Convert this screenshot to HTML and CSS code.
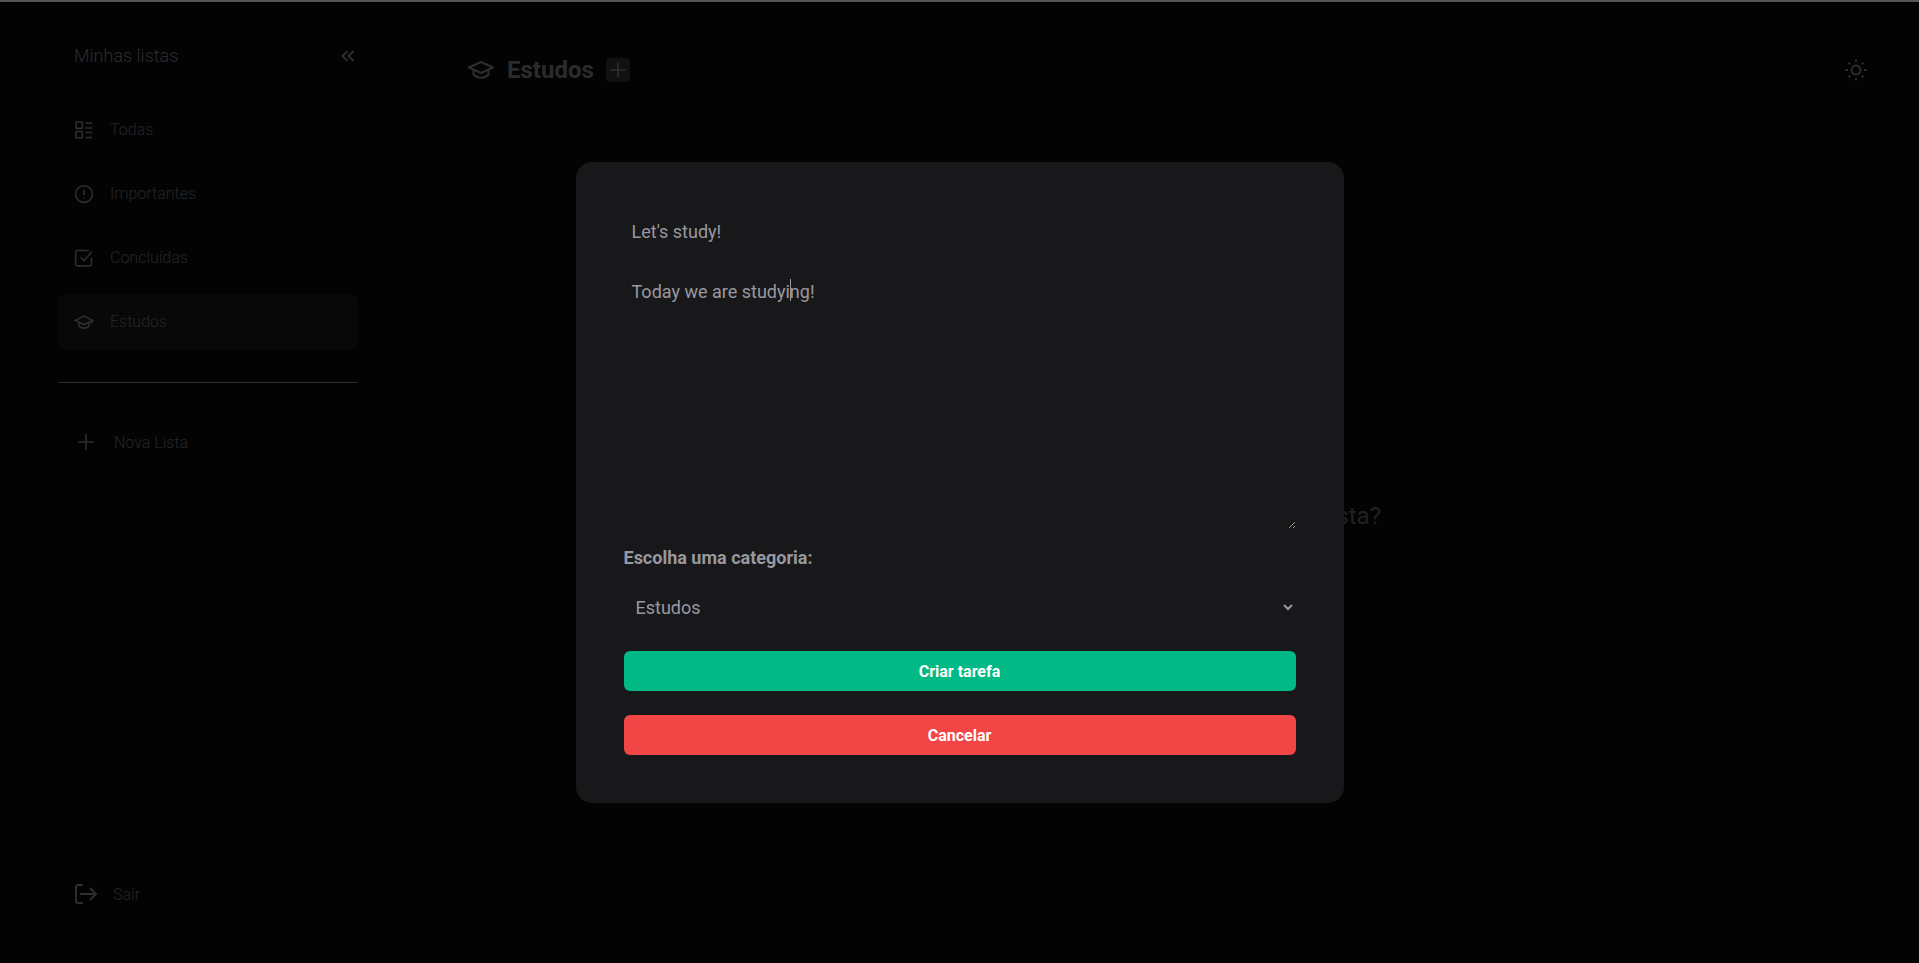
FILE: index.html
```html
<!DOCTYPE html>
<html lang="pt-BR">
<head>
    <meta charset="UTF-8">
    <meta name="viewport" content="width=device-width, initial-scale=1.0">
    <title>Estudos</title>
    <link rel="stylesheet" href="styles.css">
</head>
<body>
    <div class="top-line"></div>

    <div class="app">
        <aside class="sidebar">
            <div class="sidebar-head">
                <span class="sidebar-title">Minhas listas</span>
                <svg class="collapse-icon" width="16" height="16" viewBox="0 0 16 16"><path d="M7.500 3 2.500 8l5 5M13.500 3l-5 5 5 5"/></svg>
            </div>

            <nav class="lists">
                <a class="list-item">
                    <svg class="icon" viewBox="0 0 24 24"><rect x="2.400" y="2.400" width="7.600" height="7.600" rx=".5"/><rect x="2.400" y="13.700" width="7.600" height="7.600" rx=".5"/><path d="M13.600 3.600H22M13.600 9.600H22M13.600 15H22M13.600 21H22"/></svg>
                    <span class="item-label">Todas</span>
                </a>
                <a class="list-item">
                    <svg class="icon" viewBox="0 0 24 24"><circle cx="12" cy="12" r="10"/><path d="M12 6.500v7M12 16.200v1.300"/></svg>
                    <span class="item-label">Importantes</span>
                </a>
                <a class="list-item">
                    <svg class="icon" viewBox="0 0 24 24"><path d="M21 12v7.500a2 2 0 0 1-2 2H4a2 2 0 0 1-2-2V5a2 2 0 0 1 2-2h14"/><path d="m8 11 4 4 9.500-10.500"/></svg>
                    <span class="item-label">Concluídas</span>
                </a>
                <a class="list-item active">
                    <svg class="icon" viewBox="0 0 24 24"><path d="M12 5 2 10l10 5 10-5z"/><path d="M6 12.500V17c1.500 1.600 3.500 2.300 6 2.300s4.500-.7 6-2.300v-4.500"/><path d="M21.500 10v4"/></svg>
                    <span class="item-label">Estudos</span>
                </a>
            </nav>

            <hr class="divider">

            <a class="new-list">
                <svg class="icon" viewBox="0 0 24 24"><path d="M12 2.500v19M2.500 12h19"/></svg>
                <span>Nova Lista</span>
            </a>

            <a class="logout">
                <svg class="logout-icon" viewBox="0 0 24 24"><path d="M8 3H3a2 2 0 0 0-2 2v14a2 2 0 0 0 2 2h5"/><path d="M5 12h16M15 6l6 6-6 6"/></svg>
                <span>Sair</span>
            </a>
        </aside>

        <main class="main">
            <header class="main-head">
                <svg class="head-cap" viewBox="0 0 26 18"><path d="M13 1 1 6.500 13 12l12-5.500z"/><path d="M5.500 9v4.500c2 2.200 4.500 3.200 7.500 3.200s5.500-1 7.500-3.200V9"/></svg>
                <h1 class="main-title">Estudos</h1>
                <button class="add-btn">
                    <svg width="18" height="18" viewBox="0 0 18 18"><path d="M9 1.500v15M1.500 9h15"/></svg>
                </button>
                <svg class="sun-icon" width="24" height="24" viewBox="0 0 24 24"><circle cx="12" cy="12" r="4.500"/><path d="M12 1.500v2.500M12 20v2.500M1.500 12H4M20 12h2.500M4.600 4.600l1.700 1.700M17.700 17.700l1.700 1.700M4.600 19.400l1.700-1.700M17.700 6.300l1.700-1.700"/></svg>
            </header>
            <p class="empty-text">Que tal criar uma tarefa nesta lista?</p>
        </main>
    </div>

    <div class="overlay">
        <form class="modal">
            <input class="field title-field" type="text" value="Let's study!">
            <div class="desc-wrap">
                <textarea class="field desc-field">Today we are studying!</textarea>
                <span class="caret"></span>
            </div>
            <label class="cat-label" for="categoria">Escolha uma categoria:</label>
            <select class="cat-select" id="categoria">
                <option>Estudos</option>
            </select>
            <button class="btn btn-create" type="button">Criar tarefa</button>
            <button class="btn btn-cancel" type="button">Cancelar</button>
        </form>
    </div>
</body>
</html>
```

FILE: styles.css
```css
* {
    box-sizing: border-box;
}
html, body {
    height: 100%;
}
body {
    margin: 0;
    font-family: Roboto, "Liberation Sans", sans-serif;
    background-color: #0f0f11;
    color: #a1a1aa;
    overflow: hidden;
}
.top-line {
    height: 2px;
    background-color: #555;
}
.app {
    display: flex;
    height: 961px;
}

/* barra lateral */
.sidebar {
    display: flex;
    flex-direction: column;
    flex: none;
    width: 300px;
    margin-left: 58px;
}
.sidebar-head {
    display: flex;
    align-items: center;
    justify-content: space-between;
    height: 24px;
    margin-top: 41px;
    padding: 0 2px 0 16px;
}
.sidebar-title {
    font-size: 18px;
    font-weight: 300;
    color: #d4d4d8;
}
.collapse-icon {
    margin-top: 2px;
    fill: none;
    stroke: #e4e4e7;
    stroke-width: 2;
}
.lists {
    display: flex;
    flex-direction: column;
    gap: 8px;
    margin-top: 35px;
}
.list-item {
    display: flex;
    align-items: center;
    gap: 16px;
    height: 56px;
    padding-left: 16px;
    border-radius: 8px;
    font-size: 16px;
    font-weight: 300;
    color: #b4b4bb;
}
.item-label {
    margin-bottom: 2px;
}
.list-item.active {
    background-color: #2a2a2d;
}
.icon {
    flex: none;
    width: 20px;
    height: 20px;
    fill: none;
    stroke: #e4e4e7;
    stroke-width: 1.900;
}
.divider {
    width: 100%;
    height: 1px;
    margin: 32px 0 0;
    border: 0;
    background-color: #e4e4e7;
}
.new-list {
    display: flex;
    align-items: center;
    gap: 18px;
    margin-top: 49px;
    padding-left: 18px;
    font-size: 16px;
    font-weight: 300;
    color: #b4b4bb;
}
.logout {
    display: flex;
    align-items: center;
    gap: 14px;
    margin-top: auto;
    margin-bottom: 57px;
    padding-left: 17px;
    font-size: 16px;
    font-weight: 300;
    color: #b4b4bb;
}
.logout-icon {
    flex: none;
    width: 24px;
    height: 24px;
    fill: none;
    stroke: #e4e4e7;
    stroke-width: 1.900;
}

/* area principal */
.main {
    flex: 1;
    display: flex;
    flex-direction: column;
    padding: 56px 51px 0 110px;
}
.main-head {
    display: flex;
    align-items: center;
    height: 24px;
}
.head-cap {
    width: 26px;
    height: 18px;
    fill: none;
    stroke: #e4e4e7;
    stroke-width: 2;
}
.main-title {
    margin: 0 12px 0 13px;
    font-size: 24px;
    font-weight: 700;
    color: #d4d4d8;
}
.add-btn {
    display: flex;
    align-items: center;
    justify-content: center;
    width: 24px;
    height: 24px;
    padding: 0;
    border: 0;
    border-radius: 4px;
    background-color: #555;
}
.add-btn svg {
    fill: none;
    stroke: #e4e4e7;
    stroke-width: 1.600;
}
.sun-icon {
    margin-left: auto;
    fill: none;
    stroke: #e4e4e7;
    stroke-width: 1.900;
}
.empty-text {
    margin: 420px 0 0;
    padding-right: 487px;
    text-align: right;
    font-size: 24px;
    color: #a1a1aa;
}

/* modal */
.overlay {
    position: fixed;
    top: 2px;
    right: 0;
    bottom: 0;
    left: 0;
    z-index: 10;
    display: flex;
    align-items: center;
    justify-content: center;
    background-color: rgba(0, 0, 0, 0.8);
}
.modal {
    display: flex;
    flex-direction: column;
    width: 768px;
    height: 641px;
    padding: 48px;
    border-radius: 16px;
    background-color: #18181b;
}
.field {
    display: block;
    width: 100%;
    padding: 8px;
    border: 0;
    outline: 0;
    background: transparent;
    font-family: inherit;
    font-size: 18px;
    line-height: 26px;
    color: #98989f;
}
.title-field {
    height: 42px;
}
.desc-wrap {
    position: relative;
    margin-top: 19px;
}
.desc-field {
    height: 258px;
    resize: vertical;
}
.caret {
    position: absolute;
    top: 8px;
    left: 166px;
    width: 1px;
    height: 22px;
    background-color: #98989f;
}
.cat-label {
    margin-top: 17px;
    font-size: 18px;
    line-height: 24px;
    font-weight: 700;
    color: #98989f;
}
.cat-select {
    height: 40px;
    margin-top: 17px;
    padding: 0 4px 0 8px;
    border: 0;
    outline: 0;
    background-color: transparent;
    font-family: inherit;
    font-size: 18px;
    color: #98989f;
}
.btn {
    height: 40px;
    flex: none;
    border: 0;
    border-radius: 6px;
    font-family: inherit;
    font-size: 16px;
    font-weight: 700;
    color: #fff;
}
.btn-create {
    margin-top: 24px;
    background-color: #00b985;
}
.btn-cancel {
    margin-top: 24px;
    background-color: #f24646;
}
```
